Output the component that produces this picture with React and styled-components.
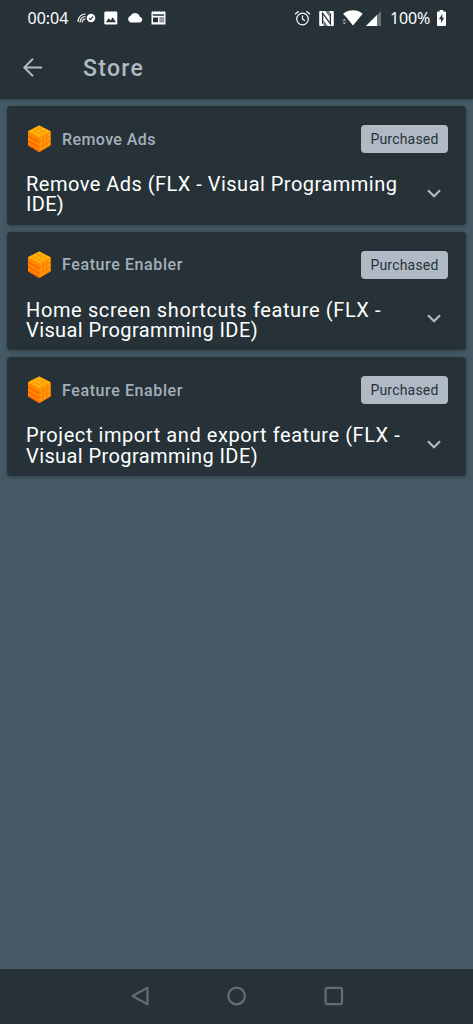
import React from 'react';
import styled, { createGlobalStyle } from "styled-components";

const GlobalStyle = createGlobalStyle`
  * {
    box-sizing: border-box;
  }
  body {
    margin: 0;
    background: #455a64;
    font-family: Roboto, "Liberation Sans", sans-serif;
  }
`;

const Screen = styled.div`
  width: 100%;
  height: 100vh;
  display: flex;
  flex-direction: column;
  overflow: hidden;
`;

const TopArea = styled.header`
  flex: none;
  height: 99px;
  background: #263238;
  box-shadow: 0 1px 3px rgba(0, 0, 0, 0.25);
`;

const StatusBar = styled.div`
  height: 36px;
  padding: 0 27.5px 0 27.5px;
  display: flex;
  align-items: center;
  justify-content: space-between;
  color: #fff;
`;

const StatusGroup = styled.div`
  display: flex;
  align-items: center;
  gap: ${(props) => props.gap};

  svg {
    display: block;
  }
`;

const NetworkIcons = styled.div`
  display: flex;
  align-items: center;
  gap: 3px;
`;

const StatusText = styled.span`
  font-family: "Noto Sans", "Open Sans", sans-serif;
  font-size: 16px;
  line-height: 36px;
  letter-spacing: ${(props) => props.spacing || "0"};
  margin-left: ${(props) => props.marginLeft || "0"};
  margin-right: ${(props) => props.marginRight || "0"};
`;

const AppBar = styled.div`
  height: 63px;
  padding-left: 22px;
  display: flex;
  align-items: center;
  color: #b0bec5;

  svg {
    margin-bottom: 1px;
  }
`;

const AppTitle = styled.h1`
  margin: 2px 0 0 40px;
  font-size: 23px;
  line-height: 28px;
  font-weight: 500;
  letter-spacing: 1.3px;
  color: #b0bac5;
`;

const CardList = styled.main`
  flex: 1;
  padding: 7.3px 7px 0;
  display: flex;
  flex-direction: column;
  gap: 7px;
`;

const Card = styled.section`
  height: 118.6px;
  padding: 18.7px 18px 0 19px;
  border-radius: 4px;
  background: #263238;
  box-shadow: 0 1px 4px rgba(0, 0, 0, 0.3);
`;

const CardHeader = styled.div`
  height: 28px;
  display: flex;
  align-items: center;
`;

const Category = styled.span`
  flex: 1;
  margin-left: 10px;
  padding-top: 0.6px;
  font-size: 16px;
  font-weight: 500;
  letter-spacing: ${(props) => props.spacing};
  color: #a5afba;
`;

const Badge = styled.span`
  width: 87px;
  height: 28px;
  border-radius: 4px;
  background: #b0bac5;
  color: #263238;
  font-size: 14px;
  line-height: 29px;
  text-align: center;
  letter-spacing: 0.2px;
`;

const CardBody = styled.div`
  margin-top: 21px;
  display: flex;
  justify-content: space-between;
`;

const Title = styled.h2`
  margin: 0;
  font-size: 20px;
  line-height: 20.5px;
  font-weight: 400;
  color: #fff;
`;

const TitleLine = styled.span`
  display: block;
  white-space: nowrap;
  letter-spacing: ${(props) => props.spacing};
`;

const ExpandButton = styled.button`
  width: 24px;
  height: 24px;
  margin: 6.8px 2px 0 0;
  padding: 0;
  border: 0;
  background: none;
  color: #b0bac5;

  svg {
    display: block;
  }
`;

const NavBar = styled.nav`
  flex: none;
  height: 55px;
  padding: 0 128px 0.5px 129px;
  display: flex;
  align-items: center;
  justify-content: space-between;
  background: #263238;
`;

const CastIcon = () => (
  <svg width="19" height="12" viewBox="0 0 19 12" fill="none" stroke="#fff" strokeWidth="1.1">
    <path d="M1 10C1 5 4.500 2 8.500 2M3 10.500C3 7 5.500 4.500 8.500 4.500M5.200 10.500C5.200 8.500 6.500 7 8.500 7" />
    <circle cx="14" cy="6" r="4.300" fill="#fff" stroke="none" />
    <path d="M12 6.200l1.400 1.400 2.600-2.900" stroke="#263238" />
  </svg>
);

const ImageIcon = () => (
  <svg width="14" height="14" viewBox="0 0 14 14">
    <rect x="0.300" y="0.500" width="13" height="13" rx="1.300" fill="#fff" />
    <path d="M2 11.300l2.600-4 2.100 2.300 2-3.300 3.200 5z" fill="#263238" />
  </svg>
);

const CloudIcon = () => (
  <svg width="16" height="12" viewBox="0 0 16 12" fill="#fff">
    <path d="M12.800 4.800A5 5 0 0 0 3.500 3.700 3.600 3.600 0 0 0 3.600 10.500h9.300a2.900 2.900 0 0 0-.1-5.700z" />
  </svg>
);

const NewsIcon = () => (
  <svg width="15" height="14" viewBox="0 0 15 14">
    <path d="M.5 1l1.200-1 1.100 1L4 0l1.200 1 1.100-1 1.200 1 1.200-1 1.100 1L11 0l1.200 1 1.100-1 1.200 1v12.500H.5z" fill="#fff" />
    <path d="M1.800 3.300h11.400v1.500H1.800zM2 6.500h5v4.800H2zM8.300 6.500h5v1h-5zM8.300 8.600h5v.8h-5zM8.300 10.500h5v.8h-5z" fill="#263238" />
  </svg>
);

const AlarmIcon = () => (
  <svg width="17" height="17" viewBox="0 0 17 17" fill="none" stroke="#fff" strokeWidth="1.200">
    <circle cx="8.500" cy="9" r="5.800" />
    <path d="M8.500 5.500V9l2.300 1.800M1 4.300l3.700-3M16 4.300l-3.700-3" />
  </svg>
);

const NfcIcon = () => (
  <svg width="15" height="15" viewBox="0 0 15 15">
    <rect x="0.200" y="0" width="14.600" height="15" rx="0.800" fill="#fff" />
    <path d="M3.600 12.800V2.200l7.800 10.600V2.200" stroke="#263238" strokeWidth="1.300" fill="none" />
    <path d="M3.600 0h2.600l4.400 6V0h1.300M11.400 15H8.800L4.400 9v6H3.100" fill="#263238" opacity="0.650" />
  </svg>
);

const WifiIcon = () => (
  <svg width="21" height="16" viewBox="0 0 21 16">
    <path d="M1 3.800C4 1.400 7.500.3 11 .3s7 1.100 9.700 3.500L11 15.500 6.500 10 4.500 7.500z" fill="#fff" />
    <path d="M.4 10.800l1.900-2.400 1.900 2.400zM.4 12.200h3.800l-1.900 2.400z" fill="#9da5a9" />
  </svg>
);

const SignalIcon = () => (
  <svg width="15" height="15" viewBox="0 0 15 15">
    <path d="M15 0v15H0z" fill="#667075" />
    <path d="M11 4v11H0z" fill="#fff" />
  </svg>
);

const BatteryIcon = () => (
  <svg width="9" height="16" viewBox="0 0 9 16">
    <path d="M2.700 0h3.600v1.600H8a1 1 0 0 1 1 1V15a1 1 0 0 1-1 1H1a1 1 0 0 1-1-1V2.600a1 1 0 0 1 1-1h1.700z" fill="#fff" />
    <path d="M5.300 4L1.900 9.300H4V13l3.200-5.200H5.300z" fill="#263238" />
  </svg>
);

const BackIcon = () => (
  <svg width="21" height="20" viewBox="0 0 21 20" fill="none" stroke="#b0bac5" strokeWidth="2">
    <path d="M20 10.500H2.500M11 1.800L2.300 10.500l8.700 8.700" />
  </svg>
);

const CubeIcon = () => (
  <svg width="26" height="28" viewBox="0 0 26 28">
    <path d="M13.200.5L24.500 6.300v14L13.200 27 2 20.300v-14z" fill="#ff9300" />
    <path d="M13.200.5L24.500 6.300 13.200 12.500 2 6.300z" fill="#ffb30b" />
    <path d="M2 6.300l11.200 6.200V27L2 20.300z" fill="#ff8b00" />
    <path d="M13.200 12.500l11.300-6.200v14L13.200 27z" fill="#ff9a08" />
    <path d="M5.700 4.400l11.200 6.100M9.400 2.400l11.300 6M20.700 4.400L9.500 10.500M17 2.400L5.700 8.400" stroke="#f99300" strokeWidth="0.800" />
    <path d="M2 11l11.200 6.300M2 15.700l11.200 6.500M2.500 20L13.200 26.400" stroke="#ff5a00" strokeWidth="1.300" />
    <path d="M5.700 8.400v14M9.500 10.500v14.200M13.200 12.500V27" stroke="#ff7200" strokeWidth="0.600" />
    <path d="M13.200 17.300L24.500 11M13.200 22.200l11.300-6.500M13.200 26.600l11.300-6.500M17 10.500v14M20.700 8.400v14" stroke="#fb7600" strokeWidth="0.800" />
  </svg>
);

const ChevronIcon = () => (
  <svg width="24" height="24" viewBox="0 0 24 24" fill="none" stroke="currentColor" strokeWidth="2.200">
    <path d="M6 9.200l6 6 6-6" />
  </svg>
);

const products = [
  {
    category: "Remove Ads",
    categorySpacing: "0.4px",
    lines: [
      { text: "Remove Ads (FLX - Visual Programming", spacing: "0.48px" },
      { text: "IDE)", spacing: "0.3px" },
    ],
  },
  {
    category: "Feature Enabler",
    categorySpacing: "0.6px",
    lines: [
      { text: "Home screen shortcuts feature (FLX -", spacing: "0.62px" },
      { text: "Visual Programming IDE)", spacing: "0.4px" },
    ],
  },
  {
    category: "Feature Enabler",
    categorySpacing: "0.6px",
    lines: [
      { text: "Project import and export feature (FLX -", spacing: "0.57px" },
      { text: "Visual Programming IDE)", spacing: "0.4px" },
    ],
  },
];

const ProductCard = ({ product }) => (
  <Card>
    <CardHeader>
      <CubeIcon />
      <Category spacing={product.categorySpacing}>{product.category}</Category>
      <Badge>Purchased</Badge>
    </CardHeader>
    <CardBody>
      <Title>
        {product.lines.map((line) => (
          <TitleLine key={line.text} spacing={line.spacing}>{line.text} </TitleLine>
        ))}
      </Title>
      <ExpandButton aria-label="Expand">
        <ChevronIcon />
      </ExpandButton>
    </CardBody>
  </Card>
);

const App = () => {
  return (
    <Screen>
      <GlobalStyle />
      <TopArea>
        <StatusBar>
          <StatusGroup gap="8.5px">
            <StatusText>00:04</StatusText>
            <CastIcon />
            <ImageIcon />
            <CloudIcon />
            <NewsIcon />
          </StatusGroup>
          <StatusGroup gap="8px">
            <AlarmIcon />
            <NfcIcon />
            <NetworkIcons>
              <WifiIcon />
              <SignalIcon />
            </NetworkIcons>
            <StatusText marginLeft="1.5px" marginRight="-1.5px" spacing="-0.2px">100%</StatusText>
            <BatteryIcon />
          </StatusGroup>
        </StatusBar>
        <AppBar>
          <BackIcon />
          <AppTitle>Store</AppTitle>
        </AppBar>
      </TopArea>
      <CardList>
        {products.map((product, i) => (
          <ProductCard key={i} product={product} />
        ))}
      </CardList>
      <NavBar>
        <svg width="22" height="22" viewBox="0 0 22 22" fill="none" stroke="#636c70" strokeWidth="2.200" strokeLinejoin="round">
          <path d="M18.500 2.800v16.400L3.500 11z" />
        </svg>
        <svg width="22" height="22" viewBox="0 0 22 22" fill="none" stroke="#636c70" strokeWidth="2.200">
          <circle cx="10.600" cy="11" r="8.300" />
        </svg>
        <svg width="22" height="22" viewBox="0 0 22 22" fill="none" stroke="#636c70" strokeWidth="2.200">
          <rect x="2.600" y="2.800" width="16.400" height="16.400" rx="2" />
        </svg>
      </NavBar>
    </Screen>
  );
};

export default App;
